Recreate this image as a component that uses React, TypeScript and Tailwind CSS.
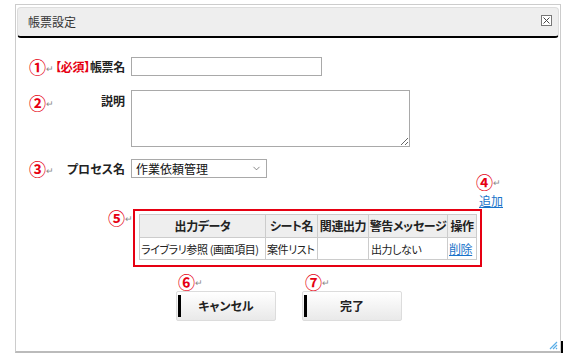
import { ChevronDown } from "lucide-react";

const font = "font-['Noto_Sans_CJK_JP','Noto_Sans',sans-serif] [font-feature-settings:'palt']";

function Mark({ n }: { n: string }) {
  return (
    <span className="flex items-center leading-[15px]">
      <span className="text-[17px] font-bold text-[#e60012]">{n}</span>
      <span className="mt-[3px] text-[9px] text-[#888]">↵</span>
    </span>
  );
}

function CloseIcon() {
  return (
    <svg width="11" height="11" viewBox="0 0 11 11">
      <rect x="0.5" y="0.5" width="10" height="10" fill="#fff" stroke="#777" />
      <path d="M2.5 2.5 L8.5 8.5 M8.5 2.5 L2.5 8.5" stroke="#444" strokeWidth="1" />
    </svg>
  );
}

function Grip() {
  return (
    <svg width="9" height="9" viewBox="0 0 9 9">
      <path d="M1 8 L8 1 M4 8 L8 4 M7 8 L8 7" stroke="#5aaee8" strokeWidth="1.2" />
    </svg>
  );
}

function FooterButton({ label }: { label: string }) {
  return (
    <button
      type="button"
      className="flex h-[30px] w-[100px] items-center rounded-[2px] border border-[#dcdcdc] bg-gradient-to-b from-white to-[#e9e9e9] text-[12px] font-bold text-[#222]"
    >
      <span className="ml-[1px] h-[22px] w-[3px] bg-black" />
      <span className="flex-1 pr-[4px] text-center">{label}</span>
    </button>
  );
}

export default function App() {
  const columns = [
    { label: "出力データ", w: "w-[126px]" },
    { label: "シート名", w: "w-[52px]" },
    { label: "関連出力", w: "w-[51px]" },
    { label: "警告メッセージ", w: "w-[79px]" },
    { label: "操作", w: "w-[29px]" },
  ];

  return (
    <div className={`h-[359px] w-[565px] bg-white pl-[15px] pt-[4px] ${font}`}>
      <div className="relative h-[349px] w-[546px] border border-[#cccccc] border-b-2 border-b-[#bbbbbb]">
        {/* Header */}
        <div className="mx-[1px] mt-[2px] flex h-[31px] items-center justify-between rounded-[4px] border border-[#dddddd] border-b-2 border-b-black bg-[#eeeeee] pl-[10px] pr-[6px]">
          <span className="text-[12px] text-[#333]">帳票設定</span>
          <span className="-mt-[3px] flex">
            <CloseIcon />
          </span>
        </div>

        {/* 帳票名 */}
        <div className="mt-[19px] flex items-center">
          <div className="flex w-[109px] items-center justify-between pl-[13px]">
            <Mark n="①" />
            <span className="whitespace-nowrap text-[12px] font-bold tracking-[-0.3px] text-[#222]">
              <span className="text-[#e60012]">【必須】</span>帳票名
            </span>
          </div>
          <input className="ml-[6px] h-[19px] w-[191px] border border-[#a9a9a9] bg-white outline-none" />
        </div>

        {/* 説明 */}
        <div className="mt-[14px] flex items-start">
          <div className="flex w-[109px] items-start justify-between pl-[13px] pt-[3px]">
            <Mark n="②" />
            <span className="-mt-[1px] text-[12px] font-bold text-[#222]">説明</span>
          </div>
          <textarea className="ml-[6px] block h-[57px] w-[279px] resize border border-[#a9a9a9] bg-white outline-none" />
        </div>

        {/* プロセス名 */}
        <div className="mt-[12px] flex items-center">
          <div className="flex w-[109px] items-center justify-between pl-[13px]">
            <Mark n="③" />
            <span className="text-[12px] font-bold text-[#222]">プロセス名</span>
          </div>
          <div className="ml-[6px] flex h-[19px] w-[136px] items-center justify-between border border-[#a9a9a9] bg-white pl-[4px] pr-[4px]">
            <span className="text-[12px] text-[#111]">作業依頼管理</span>
            <ChevronDown className="h-[11px] w-[11px] text-[#555]" strokeWidth={1.5} />
          </div>
        </div>

        {/* Output table */}
        <div className="-mt-[6px] ml-[92px] w-[395px]">
          <div className="flex justify-end">
            <div className="flex flex-col items-end">
              <span className="pr-[2px]">
                <Mark n="④" />
              </span>
              <a className="mt-[4px] text-[12px] leading-[14px] text-[#1a73c9] underline">追加</a>
            </div>
          </div>
          <div className="mt-[1px] flex items-start">
            <span className="-mt-[1px] w-[25px]">
              <Mark n="⑤" />
            </span>
            <div className="w-[349px] border-2 border-[#e60012] px-[4px] pb-[5px] pt-[3px]">
              <table className="w-[337px] table-fixed border-collapse text-[12px] leading-[14px] tracking-[-0.4px] text-[#222]">
                <thead>
                  <tr className="h-[23px] bg-[#eeeeee]">
                    {columns.map((c) => (
                      <th key={c.label} className={`${c.w} whitespace-nowrap border border-[#cccccc] px-0 font-bold`}>
                        {c.label}
                      </th>
                    ))}
                  </tr>
                </thead>
                <tbody className="text-[11px]">
                  <tr className="h-[22px]">
                    <td className="whitespace-nowrap border border-[#cccccc] px-[1px]">ライブラリ参照 (画面項目)</td>
                    <td className="whitespace-nowrap border border-[#cccccc] px-[1px]">案件リスト</td>
                    <td className="border border-[#cccccc] px-[1px]"></td>
                    <td className="whitespace-nowrap border border-[#cccccc] px-[2px]">出力しない</td>
                    <td className="whitespace-nowrap border border-[#cccccc] px-[1px] text-[12px]">
                      <a className="text-[#1a73c9] underline">削除</a>
                    </td>
                  </tr>
                </tbody>
              </table>
            </div>
          </div>
        </div>

        {/* Buttons */}
        <div className="ml-[160px] mt-[5px] flex gap-[26px]">
          <div className="flex flex-col">
            <span className="pl-[2px]">
              <Mark n="⑥" />
            </span>
            <div className="mt-[1px]">
              <FooterButton label="キャンセル" />
            </div>
          </div>
          <div className="flex flex-col">
            <span className="pl-[3px]">
              <Mark n="⑦" />
            </span>
            <div className="mt-[1px]">
              <FooterButton label="完了" />
            </div>
          </div>
        </div>

        <span className="absolute bottom-[1px] right-[2px] flex">
          <Grip />
        </span>
        <span className="absolute -bottom-[2px] -right-[3px] h-[12px] w-[2px] bg-black" />
      </div>
    </div>
  );
}
